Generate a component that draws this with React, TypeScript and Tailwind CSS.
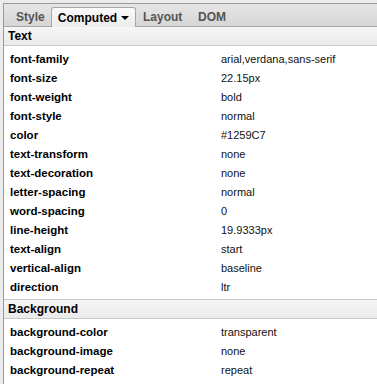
const textProps: [string, string][] = [
  ["font-family", "arial,verdana,sans-serif"],
  ["font-size", "22.15px"],
  ["font-weight", "bold"],
  ["font-style", "normal"],
  ["color", "#1259C7"],
  ["text-transform", "none"],
  ["text-decoration", "none"],
  ["letter-spacing", "normal"],
  ["word-spacing", "0"],
  ["line-height", "19.9333px"],
  ["text-align", "start"],
  ["vertical-align", "baseline"],
  ["direction", "ltr"],
]

const bgProps: [string, string][] = [
  ["background-color", "transparent"],
  ["background-image", "none"],
  ["background-repeat", "repeat"],
  ["background-position", "0% 0%"],
]

function Section({ title, rows }: { title: string; rows: [string, string][] }) {
  return (
    <div>
      <div className="h-[19px] pl-[4px] flex items-center font-bold text-[12px] text-black bg-gradient-to-b from-[#f6f6f6] to-[#ebebeb] border-b border-[#c8c8c8]">
        {title}
      </div>
      <div className="pt-[4px] pb-[2px]">
        {rows.map(([name, value]) => (
          <div key={name} className="h-[19px] flex items-center">
            <div className="w-[217px] pl-[6px] font-bold text-black">{name}</div>
            <div className="text-[11px] text-[#111]">{value}</div>
          </div>
        ))}
      </div>
    </div>
  )
}

export default function App() {
  return (
    <div
      className="w-[377px] h-[384px] overflow-hidden bg-[#ececec] pt-[3px] text-[11.5px]"
      style={{ fontFamily: "'Liberation Sans', Arial, sans-serif" }}
    >
      <div className="ml-[3px] h-[381px] bg-white border-l border-t border-[#9a9a9a]">
        <div className="h-[23px] flex items-end bg-gradient-to-b from-[#e6e6e6] to-[#d6d6d6] border-b border-[#a8a8a8] text-[12px]">
          <div className="h-[19px] w-[47px] pl-[12px] flex items-center font-bold text-[#555]">Style</div>
          <div className="h-[20px] w-[85px] -mb-px flex items-center justify-center gap-[4px] font-bold text-black rounded-t-[3px] border border-b-0 border-[#a8a8a8] bg-gradient-to-b from-[#fafafa] to-[#ececec]">
            Computed
            <svg width="8" height="4" viewBox="0 0 8 4">
              <path d="M0 0h8L4 4z" fill="#000" />
            </svg>
          </div>
          <div className="h-[19px] w-[55px] pl-[7px] flex items-center font-bold text-[#555]">Layout</div>
          <div className="h-[19px] pl-[7px] flex items-center font-bold text-[#555]">DOM</div>
        </div>
        <Section title="Text" rows={textProps} />
        <div className="border-t border-[#c8c8c8]">
          <Section title="Background" rows={bgProps} />
        </div>
      </div>
    </div>
  )
}
